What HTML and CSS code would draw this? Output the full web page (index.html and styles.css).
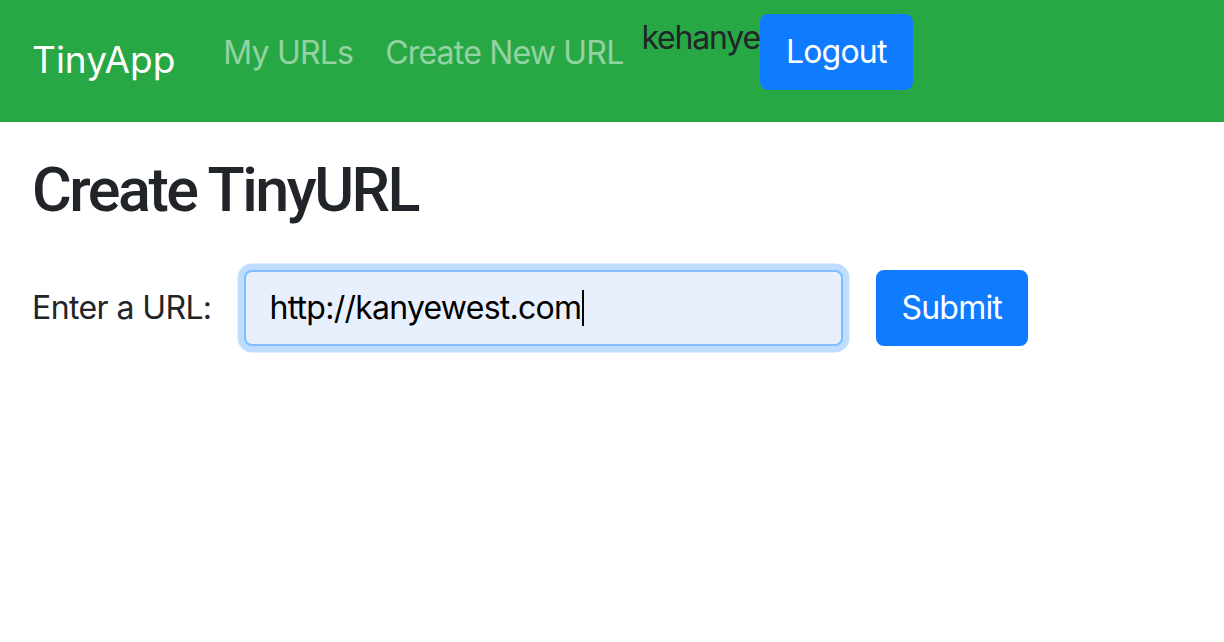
FILE: index.html
```html
<!DOCTYPE html>
<html lang="en">
<head>
<meta charset="utf-8">
<title>TinyApp</title>
<link rel="stylesheet" href="styles.css">
</head>
<body>
<nav class="navbar">
  <a class="brand" href="#">TinyApp</a>
  <ul class="nav-links">
    <li><a class="nav-link" href="#">My URLs</a></li>
    <li><a class="nav-link" href="#">Create New URL</a></li>
  </ul>
  <div class="user">
    <span class="username">kehanye</span>
    <button class="btn btn-primary" type="button">Logout</button>
  </div>
</nav>
<main class="container">
  <h1 class="title">Create TinyURL</h1>
  <form class="url-form">
    <label class="label" for="longURL">Enter a URL:</label>
    <div class="field" id="longURL"><span class="field-text">http://kanyewest.com</span><span class="caret"></span></div>
    <button class="btn btn-primary btn-submit" type="button">Submit</button>
  </form>
</main>
</body>
</html>
```
FILE: styles.css
```css
* { box-sizing: border-box; }
html, body { margin: 0; padding: 0; }
body {
  font-family: Inter, "Noto Sans", "Liberation Sans", sans-serif;
  color: #212529;
  background: #fff;
  width: 1224px;
  height: 642px;
  overflow: hidden;
}
.navbar {
  display: flex;
  align-items: flex-start;
  height: 122px;
  padding: 14px 30px 0 32px;
  background: #28a745;
}
.brand {
  margin-top: 16px;
  margin-right: 32px;
  font-size: 37px;
  line-height: 60px;
  letter-spacing: 0;
  color: #fff;
  text-decoration: none;
}
.nav-links {
  display: flex;
  list-style: none;
  margin: 15px 0 0 0;
  padding: 0;
}
.nav-link {
  display: block;
  padding: 0 16px;
  font-size: 32px;
  line-height: 48px;
  letter-spacing: -0.8px;
  color: rgba(255, 255, 255, 0.5);
  text-decoration: none;
}
.user {
  display: flex;
  align-items: flex-start;
  margin-left: 2px;
}
.username {
  font-size: 32px;
  line-height: 48px;
  letter-spacing: -1.2px;
  color: #212529;
}
.btn {
  font-family: inherit;
  font-size: 32px;
  line-height: 48px;
  letter-spacing: -0.8px;
  padding: 12px 24px;
  border: 2px solid transparent;
  border-radius: 8px;
  cursor: pointer;
}
.btn-primary {
  background: #0f7bff;
  border-color: #0f7bff;
  color: #fff;
}
.container {
  padding: 0 30px 0 32px;
}
.title {
  margin: 30px 0 41px 0;
  font-family: Roboto, Inter, sans-serif;
  font-size: 61px;
  line-height: 77px;
  font-weight: 500;
  letter-spacing: -2.5px;
}
.url-form {
  display: flex;
  align-items: center;
}
.label {
  font-size: 32px;
  line-height: 48px;
  letter-spacing: -0.6px;
  margin-right: 32px;
}
.field {
  display: flex;
  align-items: center;
  width: 599px;
  height: 76px;
  padding: 12px 24px;
  border: 2px solid #80bdff;
  border-radius: 8px;
  background: #e8f0fe;
  box-shadow: 0 0 0 6.4px rgba(0, 123, 255, 0.25);
  font-size: 32px;
  line-height: 48px;
  letter-spacing: -0.75px;
  color: #000;
}
.caret {
  display: inline-block;
  width: 2px;
  height: 36px;
  background: #000;
  margin-left: 1px;
}
.btn-submit {
  margin-left: 33px;
}
```
